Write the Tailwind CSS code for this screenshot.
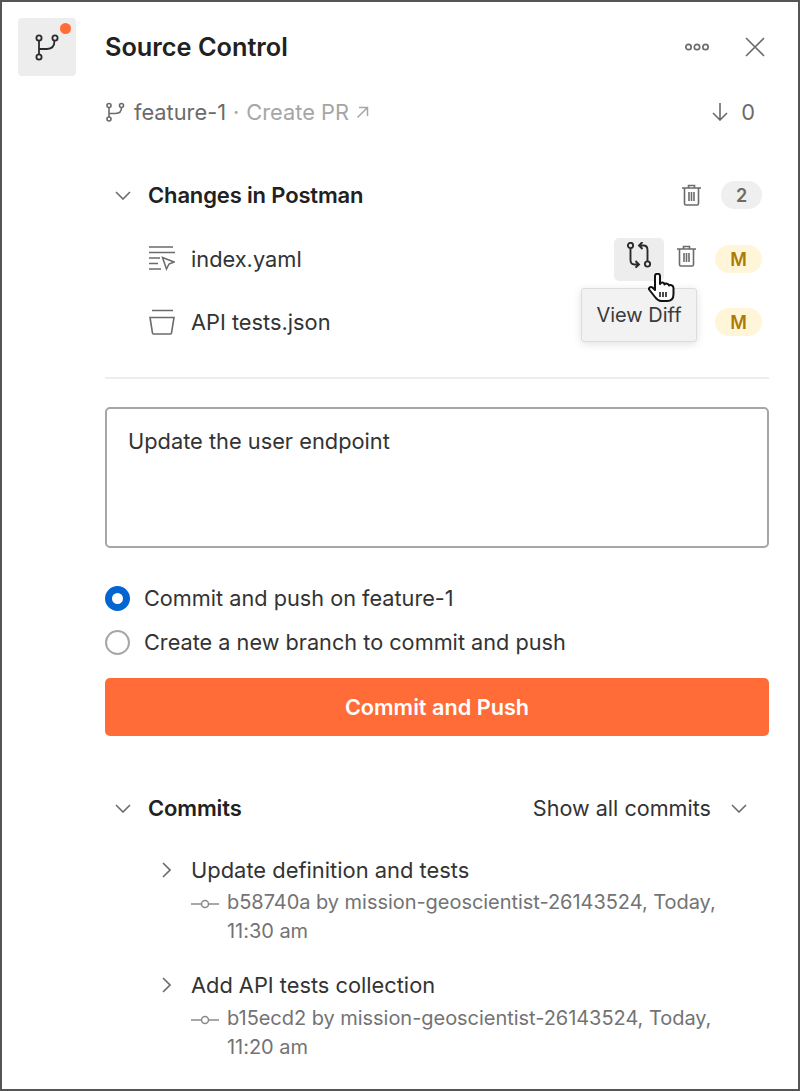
<!doctype html>
<html><head><meta charset="utf-8">
<script src="https://cdn.jsdelivr.net/npm/@tailwindcss/browser@4"></script>
</head>
<body class="m-0 bg-white">
<div class="relative flex w-[800px] h-[1091px] border-2 border-[#555555] bg-white font-['Inter',sans-serif] text-[#333333] overflow-hidden">
  <div class="w-[103px] shrink-0 pl-[16px] pt-[16px]">
    <div class="relative flex h-[58px] w-[58px] items-center justify-center rounded-[4px] bg-[#ededed]">
      <svg class="h-[32px] w-[32px]" viewBox="0 0 32 32" fill="none" stroke="#2b2b2b" stroke-width="1.800"><circle cx="8" cy="7" r="2.600"/><circle cx="8" cy="26" r="2.600"/><circle cx="24" cy="7" r="2.600"/><path d="M8 9.500v14M8 18h8c5 0 7.500-2.500 7.500-8.500"/></svg>
      <span class="absolute right-[5px] top-[5px] h-[11px] w-[11px] rounded-full bg-[#ff6c37]"></span>
    </div>
  </div>
  <div class="w-[664px] shrink-0">
    <div class="mt-[16px] flex h-[58px] items-center justify-between">
      <h1 class="text-[25.3px] font-semibold text-[#212121]">Source Control</h1>
      <div class="flex items-center">
        <svg class="mr-[35px] h-[10px] w-[26px]" viewBox="0 0 26 10" fill="none" stroke="#6b6b6b" stroke-width="1.700"><circle cx="4.500" cy="5" r="2.700"/><circle cx="13" cy="5" r="2.700"/><circle cx="21.500" cy="5" r="2.700"/></svg>
        <svg class="mr-[4px] h-[20px] w-[20px]" viewBox="0 0 20 20" fill="none" stroke="#6b6b6b" stroke-width="1.600"><path d="M1 1l18 18M19 1L1 19"/></svg>
      </div>
    </div>
    <div class="mt-[20px] flex h-[32px] items-center justify-between text-[21.8px]">
      <div class="flex items-center">
        <svg class="mr-[9px] h-[20px] w-[20px]" viewBox="0 0 20 20" fill="none" stroke="#6b6b6b" stroke-width="1.600"><circle cx="4" cy="3.500" r="2"/><circle cx="4" cy="17" r="2"/><circle cx="16.500" cy="3.500" r="2"/><path d="M4 5.500V15M4 11.500h6.500c4 0 6-2 6-6"/></svg>
        <span class="text-[#6b6b6b]">feature-1</span>
        <span class="mx-[7px] text-[#a6a6a6]">·</span>
        <span class="text-[#a6a6a6]">Create PR</span>
        <svg class="ml-[7px] h-[13px] w-[13px]" viewBox="0 0 13 13" fill="none" stroke="#a6a6a6" stroke-width="1.500"><path d="M1.500 11.500l10-10M3 1.500h8.500V10"/></svg>
      </div>
      <div class="flex items-center pr-[14px] text-[#6b6b6b]">
        <svg class="mr-[13px] h-[18px] w-[16px]" viewBox="0 0 16 18" fill="none" stroke="#6b6b6b" stroke-width="1.600"><path d="M8 0v17M1 10l7 7 7-7"/></svg>
        <span>0</span>
      </div>
    </div>
    <div class="mt-[51px] flex h-[32px] items-center justify-between">
      <div class="flex items-center">
        <svg class="ml-[10px] mr-[17px] h-[9px] w-[16px]" viewBox="0 0 16 9" fill="none" stroke="#6b6b6b" stroke-width="1.600"><path d="M1 1l7 7 7-7"/></svg>
        <span class="text-[22px] font-semibold tracking-[-0.15px] text-[#212121]">Changes in Postman</span>
      </div>
      <div class="flex items-center pr-[7px]">
        <svg class="mr-[20px] h-[22px] w-[19px]" viewBox="0 0 19 22" fill="none" stroke="#6b6b6b" stroke-width="1.600"><path d="M0 4h19M6.500 4V1.500h6V4M2.500 4v15.500a1.500 1.500 0 0 0 1.500 1.500h11a1.500 1.500 0 0 0 1.500-1.500V4M7 8v9M9.500 8v9M12 8v9"/></svg>
        <span class="flex h-[28px] w-[41px] items-center justify-center rounded-full bg-[#efefef] text-[18px] font-semibold text-[#6b6b6b]">2</span>
      </div>
    </div>
    <div class="mt-[32px] flex h-[32px] items-center justify-between pl-[43px]">
      <div class="flex items-center">
        <svg class="mr-[16px] h-[26px] w-[27px]" viewBox="0 0 27 26" fill="none" stroke="#6b6b6b" stroke-width="1.500"><path d="M1 1h24M1 6.500h26M1 12h11M1 17.500h9M1 23h12"/><path d="M14.500 11.500l11.500 4.500-5 2-2.500 5z"/></svg>
        <span class="text-[21.8px]">index.yaml</span>
      </div>
      <div class="flex items-center pr-[7px]">
        <span class="mr-[13px] flex h-[43px] w-[50px] items-center justify-center rounded-[5px] bg-[#ededed] pb-[9px]">
          <svg class="h-[26px] w-[24px]" viewBox="0 0 24 26" fill="none" stroke="#2b2b2b" stroke-width="1.900"><circle cx="3.500" cy="3.500" r="2.600"/><circle cx="20.500" cy="22" r="2.600"/><path d="M3.500 6v12c0 3 1.500 4.500 4 4.500h4M8.500 19l3.500 3.500-3.500 3.200M20.500 19.500V8c0-3-1.500-4.500-4-4.500h-4.500M15.500 0L12 3.500l3.500 3.500"/></svg>
        </span>
        <svg class="mr-[19px] h-[22px] w-[19px] -translate-y-[3px]" viewBox="0 0 19 22" fill="none" stroke="#6b6b6b" stroke-width="1.600"><path d="M0 4h19M6.500 4V1.500h6V4M2.500 4v15.500a1.500 1.500 0 0 0 1.500 1.500h11a1.500 1.500 0 0 0 1.500-1.500V4M7 8v9M9.500 8v9M12 8v9"/></svg>
        <span class="flex h-[28px] w-[47px] items-center justify-center rounded-full bg-[#fff6d9] text-[18px] font-semibold text-[#ad7a03]">M</span>
      </div>
    </div>
    <div class="mt-[31px] flex h-[32px] items-center justify-between pl-[43px]">
      <div class="flex items-center">
        <svg class="mr-[16px] h-[26px] w-[27px]" viewBox="0 0 27 26" fill="none" stroke="#6b6b6b" stroke-width="1.600"><path d="M4 1.500h21M2 8.500h24l-2.500 15.500a1 1 0 0 1-1 1H5.500a1 1 0 0 1-1-1z"/></svg>
        <span class="text-[21.8px]">API tests.json</span>
      </div>
      <div class="pr-[7px]"><span class="flex h-[28px] w-[47px] items-center justify-center rounded-full bg-[#fff6d9] text-[18px] font-semibold text-[#ad7a03]">M</span></div>
    </div>
    <div class="mt-[39px] h-[2px] bg-[#ededed]"></div>
    <div class="mt-[28px] h-[141px] rounded-[5px] border-2 border-[#a6a6a6] px-[21px] py-[17px] text-[21.8px] leading-[30px]">Update the user endpoint</div>
    <div class="mt-[34px] flex h-[32px] items-center">
      <span class="mr-[14px] h-[25px] w-[25px] rounded-full border-[7px] border-[#0265d2] bg-white"></span>
      <span class="text-[21.7px]">Commit and push on feature-1</span>
    </div>
    <div class="mt-[12px] flex h-[32px] items-center">
      <span class="mr-[14px] h-[25px] w-[25px] rounded-full border-2 border-[#a6a6a6] bg-white"></span>
      <span class="text-[21.7px]">Create a new branch to commit and push</span>
    </div>
    <button class="mt-[20px] flex h-[58px] w-full items-center justify-center rounded-[5px] bg-[#ff6c37] text-[21.7px] font-semibold text-white">Commit and Push</button>
    <div class="mt-[56px] flex h-[32px] items-center justify-between">
      <div class="flex items-center">
        <svg class="ml-[10px] mr-[17px] h-[9px] w-[16px]" viewBox="0 0 16 9" fill="none" stroke="#6b6b6b" stroke-width="1.600"><path d="M1 1l7 7 7-7"/></svg>
        <span class="text-[22px] font-semibold tracking-[-0.15px] text-[#212121]">Commits</span>
      </div>
      <div class="flex items-center pr-[22px]">
        <span class="text-[21.6px]">Show all commits</span>
        <svg class="ml-[20px] h-[9px] w-[16px]" viewBox="0 0 16 9" fill="none" stroke="#6b6b6b" stroke-width="1.600"><path d="M1 1l7 7 7-7"/></svg>
      </div>
    </div>
    <div class="mt-[30px] flex h-[32px] items-center">
      <svg class="ml-[57px] mr-[20px] h-[16px] w-[9px]" viewBox="0 0 9 16" fill="none" stroke="#6b6b6b" stroke-width="1.600"><path d="M1 1l7 7-7 7"/></svg>
      <span class="text-[21.9px]">Update definition and tests</span>
    </div>
    <div class="flex pl-[86px] pt-[2px]">
      <svg class="mr-[8px] mt-[11px] h-[10px] w-[28px] shrink-0" viewBox="0 0 28 10" fill="none" stroke="#8a8a8a" stroke-width="1.500"><circle cx="14" cy="5" r="3.500"/><path d="M0 5h10.500M17.500 5H28"/></svg>
      <p class="text-[20px] leading-[29px] tracking-[-0.04px] text-[#737373]">b58740a by mission-geoscientist-26143524, Today,<br>11:30 am</p>
    </div>
    <div class="mt-[23px] flex h-[32px] items-center">
      <svg class="ml-[57px] mr-[20px] h-[16px] w-[9px]" viewBox="0 0 9 16" fill="none" stroke="#6b6b6b" stroke-width="1.600"><path d="M1 1l7 7-7 7"/></svg>
      <span class="text-[21.8px]">Add API tests collection</span>
    </div>
    <div class="flex pl-[86px] pt-[3px]">
      <svg class="mr-[8px] mt-[11px] h-[10px] w-[28px] shrink-0" viewBox="0 0 28 10" fill="none" stroke="#8a8a8a" stroke-width="1.500"><circle cx="14" cy="5" r="3.500"/><path d="M0 5h10.500M17.500 5H28"/></svg>
      <p class="text-[20px] leading-[29px] tracking-[-0.04px] text-[#737373]">b15ecd2 by mission-geoscientist-26143524, Today,<br>11:20 am</p>
    </div>
  </div>
  <div class="absolute left-[579px] top-[286px] flex h-[54px] w-[116px] items-center justify-center rounded-[3px] border border-[#dcdcdc] bg-[#f2f2f2] text-[20px] text-[#3b3b3b] shadow-[0_2px_8px_rgba(0,0,0,0.12)]">View Diff</div>
  <svg class="absolute left-[646px] top-[271px] h-[29px] w-[29px]" viewBox="0 0 29 29" fill="#fff" stroke="#111" stroke-width="2" stroke-linejoin="round"><path d="M7 3c0-3 5-3 5 0v8c1-2 4-2 4.500.5c1-1.500 4-1 4.500 1c1-1 4.500-.5 4.500 2.500v6c0 4-2 7-6.500 7h-6c-3 0-4.500-2-6-4L1.500 17c-1.500-2 1-4 3-2.500L7 17z"/><path d="M12 19v5M15 19v5M18 19v5" stroke-width="1.500"/></svg>
</div>
</body></html>
